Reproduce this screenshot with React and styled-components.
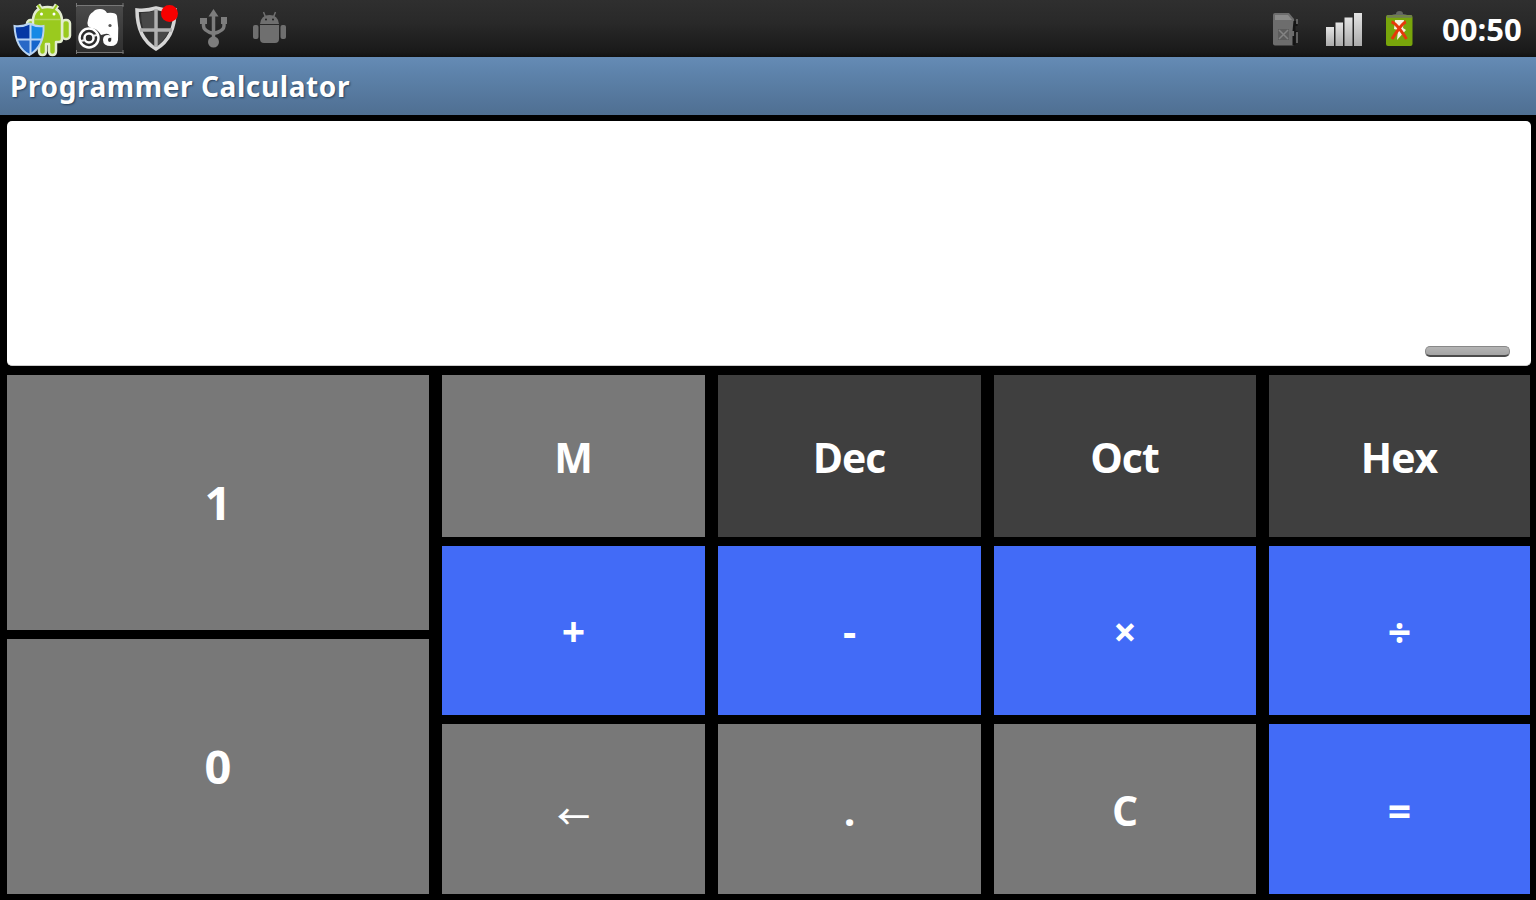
import { useState } from "react";
import styled, { createGlobalStyle } from "styled-components";

const OPERATORS = ["+", "-", "×", "÷"];
const BASES = ["Dec", "Oct", "Hex"];

export default function App() {
  const [value, setValue] = useState("");

  const append = (char) => setValue((prev) => prev + char);

  return (
    <Screen>
      <GlobalStyle />
      <StatusBar>
        <StatusIcons>
          <AndroidShieldIcon />
          <ElephantIcon />
          <ShieldIcon />
          <UsbIcon />
          <RobotIcon />
        </StatusIcons>
        <StatusIcons>
          <SimIcon />
          <SignalIcon />
          <BatteryIcon />
          <Clock>00:50</Clock>
        </StatusIcons>
      </StatusBar>
      <TitleBar>Programmer Calculator</TitleBar>
      <Content>
        <Display>
          <Value>{value}</Value>
          <Handle />
        </Display>
        <Pad>
          <Digits>
            <DigitKey onClick={() => append("1")}>1</DigitKey>
            <DigitKey onClick={() => append("0")}>0</DigitKey>
          </Digits>
          <Keys>
            <Key>M</Key>
            {BASES.map((base) => (
              <Key key={base} $tone="dark">
                {base}
              </Key>
            ))}
            {OPERATORS.map((op) => (
              <Key key={op} $tone="blue" onClick={() => append(op)}>
                {op}
              </Key>
            ))}
            <ArrowKey onClick={() => setValue((prev) => prev.slice(0, -1))}>←</ArrowKey>
            <Key onClick={() => append(".")}>.</Key>
            <Key onClick={() => setValue("")}>C</Key>
            <Key $tone="blue">=</Key>
          </Keys>
        </Pad>
      </Content>
    </Screen>
  );
}

function AndroidShieldIcon() {
  return (
    <svg width="76" height="57" viewBox="0 0 76 57">
      <g stroke="#e3ecd0" strokeWidth="2.500" strokeLinejoin="round" fill="#9aca1e">
        <path d="M38 5l4 6M57 5l-4 6" strokeWidth="5" />
        <rect x="27" y="20" width="8" height="19" rx="3.5" />
        <rect x="62" y="20" width="8" height="19" rx="3.5" />
        <path d="M33 20q1-13 14.500-13T62 20v19q0 3-3 3h-3v9q0 4-3.500 4T49 51v-7h-3v7q0 4-3.500 4T39 51v-9h-6z" />
      </g>
      <path d="M38 5l4 6M57 5l-4 6" stroke="#9aca1e" strokeWidth="2" />
      <path d="M34 19.500h27" stroke="#b5d763" strokeWidth="1.500" />
      <circle cx="41.500" cy="14" r="1.500" fill="#fff" />
      <circle cx="54" cy="14" r="1.500" fill="#fff" />
      <path d="M14.500 26q8 1 15-2.500 7 3.500 14 2.500 1 20-14 29-14-7-15-29z" fill="#1766cc" />
      <path d="M15.500 27q8 1 14-3v15H17.500q-2-6-2-12z" fill="#0638a4" />
      <path d="M30 24q7 3 12.500 3 0 7-2 12H30z" fill="#1789e5" />
      <path d="M17.500 40h12v13q-9-5-12-13z" fill="#2868c6" />
      <path
        d="M14.500 26q8 1 15-2.500 7 3.500 14 2.500 1 20-14 29-14-7-15-29zM30.500 24v31M16 39.500h26"
        fill="none"
        stroke="#b9d4f3"
        strokeWidth="2"
      />
    </svg>
  );
}

function ElephantIcon() {
  return (
    <svg width="48" height="57" viewBox="0 0 48 57">
      <defs>
        <linearGradient id="tile" x1="0" x2="0" y1="0" y2="1">
          <stop offset="0" stopColor="#4a4a4a" />
          <stop offset="1" stopColor="#2f2f2f" />
        </linearGradient>
      </defs>
      <rect y="6" width="47" height="46" fill="url(#tile)" />
      <path d="M.5 3v4M47 3v4M0 5.500h47.500M0 52.500h47.500M.5 50v4M47 50v4" stroke="#777" fill="none" />
      <path
        d="M12 20q1-6 5-8 2-3 7-3t7 4q9-1 10 3 2 12 1 24-1 6-7 6-8 0-8-6 0-5 5-5 3 0 3 3-3-1-3 2 0 2 2 2 2-1 1-5-2-4-6-3l-4 1q-4-7-10-7l-3-2q-1-4 0-6z"
        fill="#fff"
      />
      <circle cx="34" cy="25.500" r="1.600" fill="#555" />
      <circle cx="13" cy="38" r="9.500" fill="#2c2c2c" stroke="#fff" strokeWidth="2.500" />
      <circle cx="13" cy="38" r="4.500" fill="none" stroke="#fff" strokeWidth="2.500" />
      <path d="M5 41l4-1M17 36l4-1" fill="none" stroke="#eee" strokeWidth="2" />
    </svg>
  );
}

function ShieldIcon() {
  return (
    <svg width="70" height="57" viewBox="0 0 70 57">
      <path d="M13 10q10 1 19-2 9 3 19 2 0 28-19 39Q13 38 13 10z" fill="#303030" stroke="#d6d6d6" strokeWidth="3.500" />
      <path d="M17 13q7 0 13-2v17H19q-2-7-2-15zM34 31h11q-4 8-11 14z" fill="#484848" />
      <path d="M32 9v38M16 30h32" stroke="#b0b0b0" strokeWidth="3.500" />
      <circle cx="45.500" cy="13.500" r="8.500" fill="#f90000" />
    </svg>
  );
}

function UsbIcon() {
  return (
    <svg width="39" height="57" viewBox="0 0 39 57" fill="none" stroke="#7d7d7d" strokeWidth="3.500">
      <path d="M19.500 14v28M9.500 22v4q0 5 10 7.500M30 21v5q0 5-10.500 7.500" />
      <path d="M14.500 16.500l5-7.500 5 7.500z" fill="#7d7d7d" stroke="none" />
      <path d="M6 18h7v6H6zM27 17h6v7h-6z" fill="#7d7d7d" stroke="none" />
      <circle cx="19.500" cy="42" r="5.500" fill="#7d7d7d" stroke="none" />
    </svg>
  );
}

function RobotIcon() {
  return (
    <svg width="58" height="57" viewBox="-6.5 0 58 57" fill="#6f6f6f">
      <path d="M20.500 24q1-9 9.500-9t9.500 9z" />
      <path d="M24 12l2 5M36 12l-2 5" stroke="#6f6f6f" strokeWidth="1.500" />
      <path d="M20.500 25h19v14q0 4-4 4h-11q-4 0-4-4z" />
      <rect x="13.500" y="25" width="5.500" height="14" rx="2" />
      <rect x="41" y="25" width="5.500" height="14" rx="2" />
      <circle cx="26.500" cy="19.500" r="1" fill="#222" />
      <circle cx="33.500" cy="19.500" r="1" fill="#222" />
    </svg>
  );
}

function SimIcon() {
  return (
    <svg width="52" height="57" viewBox="1 0 52 57">
      <path d="M1 15q0-2 2-2h14l5 6v25q0 1.500-2 1.500H3q-2 0-2-2z" fill="#6d6d6d" />
      <path d="M3 15h13l4 5H3z" fill="#8b8b8b" />
      <path d="M21.500 21h4v5h-2v5h2v2h-2v12h-3v-9h2v-5h-2z" fill="#141414" />
      <path d="M25 19v5M25 32v11" stroke="#777" strokeWidth="1.500" />
      <rect x="6" y="29" width="11" height="11" fill="#5c5c5c" />
      <path d="M7 30l9 9M16 30l-9 9" stroke="#838383" strokeWidth="1.500" />
    </svg>
  );
}

function SignalIcon() {
  return (
    <svg width="60" height="57" viewBox="-1 0 60 57">
      <defs>
        <linearGradient id="bar" x1="0" x2="0" y1="0" y2="1">
          <stop offset="0" stopColor="#e4e4e4" />
          <stop offset="1" stopColor="#ababab" />
        </linearGradient>
      </defs>
      <g fill="url(#bar)">
        <rect x="0" y="27" width="8" height="19" />
        <rect x="9.500" y="22.500" width="7.500" height="23.500" />
        <rect x="18.500" y="17.500" width="8" height="28.500" />
        <rect x="28" y="13" width="8" height="33" />
      </g>
    </svg>
  );
}

function BatteryIcon() {
  return (
    <svg width="57" height="57" viewBox="0 0 57 57">
      <path d="M5 16q3-2 6-2 0-3 3.500-3t3.500 3q3 0 6 2z" fill="#646862" />
      <rect x="1" y="15" width="26.500" height="31" rx="2" fill="#78a50b" />
      <path d="M2 16.500h25" stroke="#707d57" strokeWidth="2.500" />
      <path d="M10 20h9l-1 8 3 2-9 10 1-10-4-1z" fill="#f4f2df" />
      <path d="M6.500 22q5 1 15 17M21 22q-4 1-14 17" stroke="#e6380b" strokeWidth="3" fill="none" />
    </svg>
  );
}

const GlobalStyle = createGlobalStyle`
  * {
    box-sizing: border-box;
  }

  body {
    margin: 0;
    background: #000;
    font-family: "Open Sans", "Noto Sans", sans-serif;
    font-weight: 700;
    color: #fff;
  }
`;

const Screen = styled.div`
  width: 1536px;
  height: 900px;
  display: flex;
  flex-direction: column;
  overflow: hidden;
  background: #000;
`;

const StatusBar = styled.header`
  height: 57px;
  display: flex;
  justify-content: space-between;
  background: linear-gradient(#2f2f2f, #292929 40%, #191919 92%, #111);
`;

const StatusIcons = styled.div`
  display: flex;
  align-items: center;

  svg {
    display: block;
  }
`;

const Clock = styled.span`
  width: 94px;
  font-size: 31px;
  line-height: 57px;
  padding-top: 2px;
`;

const TitleBar = styled.h1`
  height: 58px;
  margin: 0;
  padding: 0 10px;
  font-family: "Noto Sans", sans-serif;
  font-size: 28px;
  line-height: 58px;
  letter-spacing: 0.6px;
  text-shadow: 1px 1px 2px #263f5a;
  background: linear-gradient(#658bb5, #5d82aa 30%, #4f6f92);
`;

const Content = styled.main`
  flex: 1;
  display: flex;
  flex-direction: column;
  gap: 9px;
  padding: 6px 5px 6px 7px;
`;

const Display = styled.section`
  height: 245px;
  display: flex;
  flex-direction: column;
  align-items: flex-end;
  justify-content: space-between;
  padding: 12px 21px 8px;
  border-radius: 5px;
  border-bottom: 1px solid #ccc;
  background: #fff;
`;

const Value = styled.output`
  font-size: 42px;
  color: #000;
`;

const Handle = styled.div`
  width: 85px;
  height: 11px;
  border: 1px solid #888;
  border-bottom: 2px solid #4b4b4b;
  border-radius: 5px;
  background: linear-gradient(#b4b4b4, #a4a4a4);
`;

const Pad = styled.section`
  flex: 1;
  display: grid;
  grid-template-columns: 422px 1088px;
  gap: 13px;
`;

const Digits = styled.div`
  display: grid;
  grid-template-rows: 255px 255px;
  gap: 9px;
`;

const Keys = styled.div`
  display: grid;
  grid-template-columns: 263px 263px 262px 261px;
  grid-template-rows: 162px 169px 170px;
  column-gap: 13px;
  row-gap: 9px;
`;

const TONES = {
  gray: "#787878",
  dark: "#3f3f3f",
  blue: "#426bf7",
};

const Key = styled.button`
  padding: 2px 1px 0 0;
  border: 0;
  font: 700 41px/1 "Open Sans", "Noto Sans", sans-serif;
  letter-spacing: -1px;
  color: #fff;
  background: ${({ $tone }) => TONES[$tone || "gray"]};
`;

const DigitKey = styled(Key)`
  padding: 0;
  font-size: 47px;
  letter-spacing: 0;
`;

const ArrowKey = styled(Key)`
  padding-top: 13px;
  font-family: "Noto Sans CJK SC", sans-serif;
  font-weight: 500;
  font-size: 33px;
`;
